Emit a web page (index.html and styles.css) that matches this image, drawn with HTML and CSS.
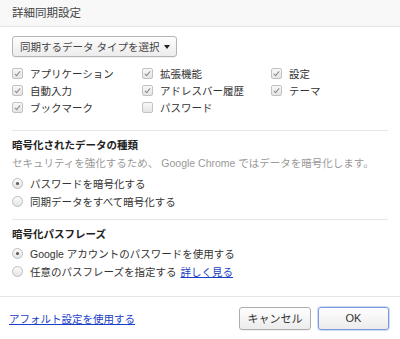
FILE: index.html
```html
<!DOCTYPE html>
<html lang="ja">

<head>
    <meta charset="UTF-8">
    <title>詳細同期設定</title>
    <link rel="stylesheet" href="styles.css">
</head>

<body>
    <div class="dialog">
        <div class="topbar">詳細同期設定</div>

        <div class="content">
            <button class="select-button">同期するデータ タイプを選択 <span class="arrow"></span></button>

            <div class="check-grid">
                <label class="check-item"><span class="box checked"></span>アプリケーション</label>
                <label class="check-item"><span class="box checked"></span>拡張機能</label>
                <label class="check-item"><span class="box checked"></span>設定</label>
                <label class="check-item"><span class="box checked"></span>自動入力</label>
                <label class="check-item"><span class="box checked"></span>アドレスバー履歴</label>
                <label class="check-item"><span class="box checked"></span>テーマ</label>
                <label class="check-item"><span class="box checked"></span>ブックマーク</label>
                <label class="check-item"><span class="box"></span>パスワード</label>
            </div>

            <div class="section">
                <div class="section-title">暗号化されたデータの種類</div>
                <div class="section-desc">セキュリティを強化するため、 Google Chrome ではデータを暗号化します。</div>
                <label class="radio-item"><span class="radio checked"></span>パスワードを暗号化する</label>
                <label class="radio-item"><span class="radio"></span>同期データをすべて暗号化する</label>
            </div>

            <div class="section">
                <div class="section-title">暗号化パスフレーズ</div>
                <label class="radio-item first"><span class="radio checked"></span>Google アカウントのパスワードを使用する</label>
                <label class="radio-item"><span class="radio"></span>任意のパスフレーズを指定する <a href="#" class="link">詳しく見る</a></label>
            </div>
        </div>

        <div class="footer">
            <a href="#" class="link">アフォルト設定を使用する</a>
            <div class="buttons">
                <button class="btn">キャンセル</button>
                <button class="btn btn-ok">OK</button>
            </div>
        </div>
    </div>
</body>

</html>
```

FILE: styles.css
```css
body {
    margin: 0;
    font-family: "Liberation Sans", "Noto Sans CJK JP", sans-serif;
    font-size: 10.5px;
    color: #333;
    background: #fff;
}

.dialog {
    width: 400px;
    height: 339px;
    display: flex;
    flex-direction: column;
}

.topbar {
    height: 26px;
    line-height: 26px;
    padding-left: 12px;
    font-size: 11.5px;
    color: #444;
    background: #f8f8f8;
    border-bottom: 1px solid #e4e4e4;
}

.content {
    padding: 9px 12px 0 12px;
}

/* dropdown button */
.select-button {
    height: 21px;
    width: 165px;
    padding: 0 0 0 7px;
    font-family: inherit;
    font-size: 10.5px;
    color: #444;
    text-align: left;
    border: 1px solid #b4b4b4;
    border-radius: 3px;
    background: linear-gradient(#fdfdfd, #ececec);
    box-shadow: 0 1px 0 rgba(0, 0, 0, 0.06);
    display: flex;
    align-items: center;
    gap: 2px;
}

.arrow {
    display: inline-block;
    width: 0;
    height: 0;
    border-left: 3.5px solid transparent;
    border-right: 3.5px solid transparent;
    border-top: 4px solid #222;
    margin-left: 3px;
}

/* checkboxes */
.check-grid {
    display: grid;
    grid-template-columns: 130px 129px auto;
    grid-auto-rows: 17px;
    margin-top: 8px;
}

.check-item {
    display: flex;
    align-items: center;
}

.box {
    width: 9px;
    height: 9px;
    margin-right: 7px;
    border: 1px solid #c2c2c2;
    border-radius: 2px;
    background: linear-gradient(#f8f8f8, #e4e4e4);
    position: relative;
    flex: none;
}

.box.checked::after {
    content: "";
    position: absolute;
    left: 2.5px;
    top: 0.5px;
    width: 2px;
    height: 5px;
    border-right: 1.5px solid #8a8a8a;
    border-bottom: 1.5px solid #8a8a8a;
    transform: rotate(40deg);
}

/* sections */
.section {
    border-top: 1px solid #e6e6e6;
    margin-top: 14px;
    padding-top: 7px;
}

.section + .section {
    margin-top: 9px;
}

.section-title {
    font-weight: bold;
    color: #222;
    line-height: 14px;
}

.section-desc {
    color: #999;
    line-height: 14px;
    margin-top: 4px;
    margin-bottom: 4px;
}

.radio-item {
    display: flex;
    align-items: center;
    height: 18px;
}

.radio-item.first {
    margin-top: 3px;
}

.radio {
    width: 9px;
    height: 9px;
    margin-right: 7px;
    border: 1px solid #bdbdbd;
    border-radius: 50%;
    background: linear-gradient(#fbfbfb, #e4e4e4);
    position: relative;
    flex: none;
}

.radio.checked::after {
    content: "";
    position: absolute;
    left: 3px;
    top: 3px;
    width: 3px;
    height: 3px;
    border-radius: 50%;
    background: #555;
}

.link {
    color: #1a3fc7;
    text-decoration: underline;
}

.radio-item .link {
    margin-left: 4px;
}

/* footer */
.footer {
    margin-top: auto;
    height: 42px;
    border-top: 1px solid #e6e6e6;
    display: flex;
    align-items: center;
    justify-content: space-between;
    padding: 0 11px 0 9px;
}

.buttons {
    display: flex;
    gap: 7px;
}

.btn {
    width: 72px;
    height: 23px;
    font-family: inherit;
    font-size: 11px;
    color: #333;
    border: 1px solid #adadad;
    border-radius: 3px;
    background: linear-gradient(#fefefe, #ececec);
    box-shadow: 0 1px 0 rgba(0, 0, 0, 0.06);
    padding: 0;
}

.btn-ok {
    width: 71px;
    border-color: #7a9ae0;
    box-shadow: 0 0 0 1px rgba(122, 154, 224, 0.35);
}
```
